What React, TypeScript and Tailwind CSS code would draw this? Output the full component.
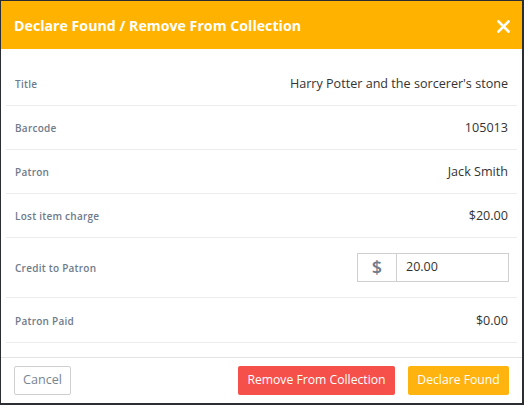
import React from "react";

const rows = [
  { label: "Title", value: "Harry Potter and the sorcerer's stone" },
  { label: "Barcode", value: "105013" },
  { label: "Patron", value: "Jack Smith" },
  { label: "Lost item charge", value: "$20.00" },
];

const Row = ({ label, children, h }: { label: string; children: React.ReactNode; h: string }) => (
  <div className={`flex items-center justify-between border-b border-[#ececec] px-[9px] pt-[2px] ${h}`}>
    <span className="text-[10px] font-semibold tracking-[0.25px] text-[#6e7b8b]">{label}</span>
    {children}
  </div>
);

export default function App() {
  return (
    <div
      className="w-[524px] h-[405px] bg-[#2a2e33] pl-px pt-px"
      style={{ fontFamily: '"Open Sans", sans-serif' }}
    >
      <div className="w-[521px] h-[402px] bg-white flex flex-col">
        {/* Header */}
        <div className="h-[48px] bg-[#ffb300] flex items-center justify-between pl-[13px] pr-[12px] pt-[2px]">
          <h1 className="text-white text-[14.2px] font-bold">
            Declare Found / Remove From Collection
          </h1>
          <svg width="13" height="13" viewBox="0 0 13 13">
            <path d="M1.5 1.5 L11.5 11.5 M11.5 1.5 L1.5 11.5" stroke="white" strokeWidth="2.6" strokeLinecap="square" />
          </svg>
        </div>

        {/* Body */}
        <div className="pt-[13px] px-[5px]">
          {rows.map((r) => (
            <Row key={r.label} label={r.label} h="h-[44px]">
              <span className="text-[12.6px] text-[#333]">{r.value}</span>
            </Row>
          ))}
          <Row label="Credit to Patron" h="h-[60px]">
            <div className="flex h-[29px] w-[152px] border border-[#cfcfcf] mr-[-1px] mb-[2px]">
              <div className="w-[39px] flex items-center justify-center border-r border-[#cfcfcf] text-[18px] font-semibold text-[#6e7b8b]">
                $
              </div>
              <div className="flex-1 flex items-center pl-[9px] text-[12.5px] text-[#333]">20.00</div>
            </div>
          </Row>
          <Row label="Patron Paid" h="h-[45px]">
            <span className="text-[12.6px] text-[#333]">$0.00</span>
          </Row>
        </div>

        {/* Footer */}
        <div className="mt-[14px] border-t border-[#e3e3e3] flex items-center justify-between px-[13px] pt-[8px]">
          <button className="h-[29px] w-[57px] border border-[#cfcfcf] rounded-[2px] text-[12.6px] text-[#7a8591] bg-white">
            Cancel
          </button>
          <div className="flex gap-[13px]">
            <button className="h-[29px] w-[157px] whitespace-nowrap rounded-[2px] bg-[#f5504a] text-white text-[12.2px]">
              Remove From Collection
            </button>
            <button className="h-[29px] w-[101px] whitespace-nowrap rounded-[2px] bg-[#ffb30f] text-white text-[12.2px]">
              Declare Found
            </button>
          </div>
        </div>
      </div>
    </div>
  );
}
